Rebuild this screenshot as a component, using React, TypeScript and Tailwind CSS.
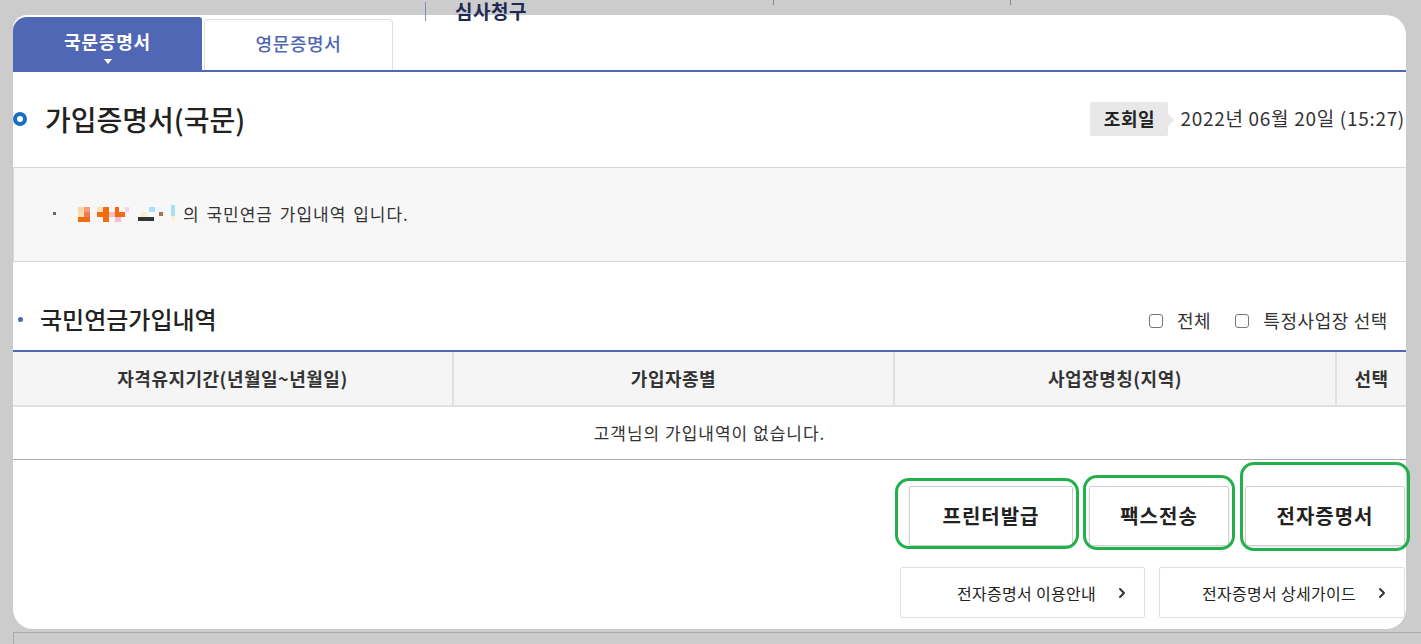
import { ChevronRight } from 'lucide-react';

const FONT = { fontFamily: '"Noto Sans CJK KR", "Noto Sans", sans-serif' };

function BlurredName() {
  // pixelated (masked) name, coordinates in page pixels from x=52, y=196
  const cells: [number, number, number, number, string][] = [
    [0, 9, 3, 3, '#666'],
    [25, 4, 6, 5, '#f8d8a8'], [31, 4, 6, 5, '#f2a070'], [25, 9, 6, 5, '#f8e0b0'], [31, 9, 6, 5, '#f07858'], [25, 14, 12, 5, '#f26b10'],
    [44, 9, 6, 5, '#f26b10'], [44, 4, 6, 5, '#f8e0b8'], [50, 4, 6, 15, '#f26b10'], [56, 9, 6, 5, '#f8c0c8'],
    [62, 4, 4, 10, '#f26b10'], [66, 9, 6, 5, '#f26b10'], [72, 4, 4, 5, '#f8d0f0'], [62, 14, 6, 5, '#f8b8d8'],
    [85, 14, 16, 4, '#333'], [88, 9, 6, 5, '#f8f0c8'], [96, 4, 6, 5, '#a8e0f8'], [104, 4, 5, 5, '#e8f6ff'], [106, 9, 4, 4, '#b07050'],
    [118, 2, 4, 11, '#a8e0f8'], [118, 13, 4, 5, '#f8f4c8'],
  ];
  return (
    <svg width="124" height="22" viewBox="0 0 124 22" className="shrink-0">
      {cells.map(([x, y, w, h, c], i) => (
        <rect key={i} x={x} y={y} width={w} height={h} fill={c} />
      ))}
    </svg>
  );
}

function Checkbox({ label }: { label: string }) {
  return (
    <label className="flex items-center gap-[14px]">
      <span className="w-[14px] h-[14px] rounded-[3px] border border-[#777] bg-white" />
      <span className="text-[18px] tracking-[0.6px] text-[#333]">{label}</span>
    </label>
  );
}

export default function App() {
  return (
    <div className="relative w-[1421px] h-[644px] bg-[#cccccc] overflow-hidden" style={FONT}>
      {/* page behind the popup */}
      <div className="absolute left-0 top-0 w-full h-[24px] z-20 pointer-events-none">
        <div className="absolute left-[425px] top-[2px] w-px h-[19px] bg-[#7a8ad0]" />
        <div className="absolute left-[455px] top-[1px] leading-[20px] text-[19px] font-bold tracking-[0.5px] text-[#1e2a55]">심사청구</div>
        <div className="absolute left-[773px] top-0 w-px h-[5px] bg-[#888]" />
        <div className="absolute left-[1010px] top-0 w-px h-[5px] bg-[#888]" />
      </div>

      <div className="pt-[15px] pl-[13px] pr-[15px]">
        <div className="h-[614px] bg-white rounded-[20px] rounded-tl-[14px] flex flex-col">
          {/* tabs */}
          <div className="h-[57px] flex items-end border-b-[2px] border-[#4f67b5]">
            <div className="w-[189px] h-[53px] bg-[#4f67b5] rounded-tl-[14px] rounded-tr-[3px] flex flex-col items-center justify-center relative">
              <span className="text-[18px] tracking-[0.8px] font-bold text-white mt-[-4px]">국문증명서</span>
              <span className="absolute bottom-[6px] w-0 h-0 border-l-[4px] border-r-[4px] border-t-[5px] border-l-transparent border-r-transparent border-t-white" />
            </div>
            <div className="ml-[2px] w-[189px] h-[51px] border border-b-0 border-[#dedede] rounded-t-[4px] flex items-center justify-center">
              <span className="text-[18px] tracking-[0.6px] font-medium text-[#4f67b5] mt-[-4px]">영문증명서</span>
            </div>
          </div>

          {/* title */}
          <div className="h-[95px] flex items-center justify-between pb-[2px]">
            <div className="flex items-center gap-[18px]">
              <span className="w-[14px] h-[14px] rounded-full border-[4px] border-[#1a6fc0]" />
              <span className="text-[28px] font-medium text-[#222]">가입증명서(국문)</span>
            </div>
            <div className="flex items-center">
              <div className="relative h-[34px] w-[78px] bg-[#e8e8e8] rounded-[2px] flex items-center justify-center">
                <span className="text-[18px] tracking-[0.5px] font-bold text-[#222]">조회일</span>
                <span className="absolute right-[-6px] top-[12px] w-0 h-0 border-t-[6px] border-b-[6px] border-l-[6px] border-t-transparent border-b-transparent border-l-[#e8e8e8]" />
              </div>
              <span className="ml-[12px] text-[19px] tracking-[0.7px] text-[#333] pr-[1px]">2022년 06월 20일 (15:27)</span>
            </div>
          </div>

          {/* info box */}
          <div className="h-[95px] bg-[#f7f7f7] border-y border-l border-[#d8d8d8] flex items-center pl-[39px] pb-[2px]">
            <BlurredName />
            <span className="ml-[6px] text-[17px] tracking-[1px] [word-spacing:2px] text-[#333]">의 국민연금 가입내역 입니다.</span>
          </div>

          {/* section title */}
          <div className="h-[88px] flex items-end justify-between pb-[13px]">
            <div className="flex items-center gap-[17px] pl-[5px]">
              <span className="w-[5px] h-[5px] rounded-full bg-[#4f67b5]" />
              <span className="text-[24px] font-medium text-[#222]">국민연금가입내역</span>
            </div>
            <div className="flex items-center gap-[24px] pr-[18px] pb-[3px]">
              <Checkbox label="전체" />
              <Checkbox label="특정사업장 선택" />
            </div>
          </div>

          {/* table */}
          <div className="border-t-[2px] border-[#4f67b5]">
            <div className="h-[55px] bg-[#f5f5f5] border-b-[2px] border-[#e0e0e0] grid grid-cols-[441px_441px_442px_1fr] text-[18px] tracking-[0.5px] font-bold text-[#333]">
              <div className="flex items-center justify-center border-r-[2px] border-[#e0e0e0]">자격유지기간(년월일~년월일)</div>
              <div className="flex items-center justify-center border-r-[2px] border-[#e0e0e0]">가입자종별</div>
              <div className="flex items-center justify-center border-r-[2px] border-[#e0e0e0]">사업장명칭(지역)</div>
              <div className="flex items-center justify-center">선택</div>
            </div>
            <div className="h-[53px] border-b border-[#aaaaaa] flex items-center justify-center text-[17px] tracking-[1px] text-[#333]">
              고객님의 가입내역이 없습니다.
            </div>
          </div>

          {/* buttons */}
          <div className="flex justify-end gap-[16px] mt-[26px] pr-[1px]">
            {[
              ['프린터발급', 'w-[164px]'],
              ['팩스전송', 'w-[140px]'],
              ['전자증명서', 'w-[160px]'],
            ].map(([label, w]) => (
              <button
                key={label}
                className={`${w} h-[60px] bg-white border border-[#cfcfcf] rounded-[2px] shadow-[0_1px_2px_rgba(0,0,0,0.12)] text-[20px] tracking-[1px] font-bold text-[#222]`}
              >
                {label}
              </button>
            ))}
          </div>
          <div className="flex justify-end gap-[14px] mt-[21px] pr-[1px]">
            {[
              ['전자증명서 이용안내', 'w-[245px]'],
              ['전자증명서 상세가이드', 'w-[246px]'],
            ].map(([label, w]) => (
              <button
                key={label}
                className={`${w} h-[51px] bg-white border border-[#e0e0e0] rounded-[2px] flex items-center justify-end gap-[18px] pr-[14px] text-[16px] tracking-[0.3px] text-[#222]`}
              >
                <span>{label}</span>
                <ChevronRight className="w-[16px] h-[16px] text-[#333]" strokeWidth={3} />
              </button>
            ))}
          </div>
        </div>
      </div>

      {/* bottom frame line */}
      <div className="ml-[13px] mt-[3px] h-[20px] border-t border-l border-[#aaaaaa]" />

      {/* green annotations */}
      <div className="absolute left-[895px] top-[478px] w-[184px] h-[71px] border-[3px] border-[#22b04b] rounded-[14px]" />
      <div className="absolute left-[1083px] top-[475px] w-[152px] h-[75px] border-[3px] border-[#22b04b] rounded-[14px]" />
      <div className="absolute left-[1240px] top-[462px] w-[170px] h-[89px] border-[3px] border-[#22b04b] rounded-[14px]" />
    </div>
  );
}
